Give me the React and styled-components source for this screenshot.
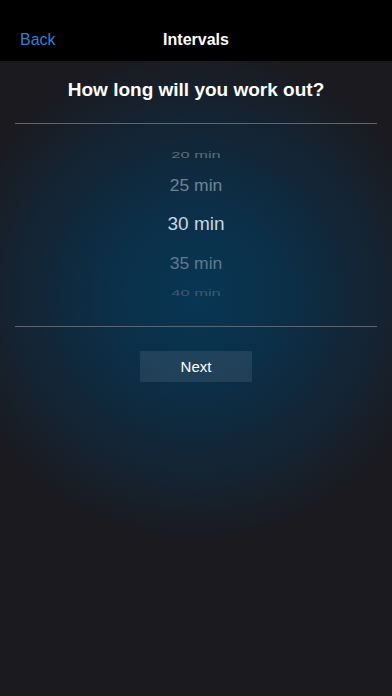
import React from "react"
import styled, { createGlobalStyle } from "styled-components"

const GlobalStyle = createGlobalStyle`
    html, body {
        margin: 0;
        padding: 0;
        background: #1b1a1f;
        font-family: "Liberation Sans", Arial, sans-serif;
    }
`

const Screen = styled.div`
    display: flex;
    flex-direction: column;
    width: 392px;
    height: 696px;
    overflow: hidden;
    background: radial-gradient(ellipse 250px 250px at 196px 295px, #083654 0%, #0b2f48 35%, #142433 70%, #1b1a1f 100%), #1b1a1f;
`

const NavBar = styled.div`
    position: relative;
    display: flex;
    align-items: center;
    justify-content: center;
    height: 61px;
    background: #000;
    flex-shrink: 0;
`

const BackButton = styled.button`
    position: absolute;
    left: 20px;
    top: 31px;
    border: none;
    background: transparent;
    padding: 0;
    color: #2d82d6;
    font-family: inherit;
    font-size: 16px;
`

const NavTitle = styled.div`
    margin-top: 19px;
    color: #fff;
    font-size: 16px;
    font-weight: 600;
`

const Content = styled.div`
    display: flex;
    flex-direction: column;
    align-items: center;
    padding: 0 15px;
`

const Question = styled.h1`
    margin: 17px 0 0;
    color: #fff;
    font-size: 19px;
    line-height: 24px;
    font-weight: 700;
`

const Divider = styled.div`
    align-self: stretch;
    height: 1px;
    margin-top: ${(p) => p.$gap || 0}px;
    background: #5d6670;
`

const Picker = styled.div`
    display: flex;
    flex-direction: column;
    align-items: center;
    width: 100%;
    height: 202px;
    padding-top: 20px;
    box-sizing: border-box;
`

const PickerItem = styled.div`
    height: ${(p) => p.$h}px;
    line-height: ${(p) => p.$h}px;
    font-size: ${(p) => p.$size}px;
    color: ${(p) => p.$color};
    transform: scaleY(${(p) => p.$scale});
    white-space: nowrap;
`

const NextButton = styled.button`
    margin-top: 24px;
    width: 112px;
    height: 31px;
    border: none;
    background: rgba(255, 255, 255, 0.09);
    color: #fff;
    font-family: inherit;
    font-size: 15px;
`

const items = [
    { label: "20 min", h: 22, size: 16.5, color: "#5a6e7e", scale: 0.55 },
    { label: "25 min", h: 38, size: 17.5, color: "#6f8594", scale: 0.92 },
    { label: "30 min", h: 40, size: 19, color: "#c9d7e0", scale: 1 },
    { label: "35 min", h: 38, size: 17.5, color: "#5f7a8c", scale: 0.92 },
    { label: "40 min", h: 22, size: 16.5, color: "#3f5a6c", scale: 0.55 },
]

const App = () => {
    return (
        <Screen>
            <GlobalStyle />
            <NavBar>
                <BackButton>Back</BackButton>
                <NavTitle>Intervals</NavTitle>
            </NavBar>
            <Content>
                <Question>How long will you work out?</Question>
                <Divider $gap={21} />
                <Picker>
                    {items.map((it) => (
                        <PickerItem key={it.label} $h={it.h} $size={it.size} $color={it.color} $scale={it.scale}>
                            {it.label}
                        </PickerItem>
                    ))}
                </Picker>
                <Divider />
                <NextButton>Next</NextButton>
            </Content>
        </Screen>
    )
}

export default App
